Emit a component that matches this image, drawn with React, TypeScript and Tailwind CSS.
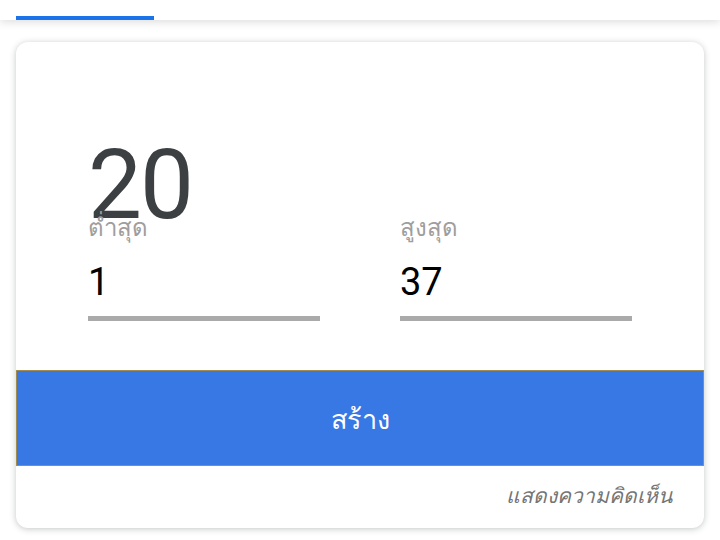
export default function App() {
  return (
    <div className="min-h-[540px] w-[720px] bg-white font-['Roboto','Noto_Sans',sans-serif]">
      <div className="relative h-5 bg-white shadow-[0_2px_8px_rgba(60,64,67,0.18)]">
        <div className="absolute bottom-0 left-4 h-1 w-[138px] bg-[#1a73e8]" />
      </div>

      <div className="mx-4 mt-[22px] overflow-hidden rounded-xl bg-white shadow-[0_1px_6px_rgba(60,64,67,0.3)]">
        <div className="px-[72px] pt-[93px]">
          <div className="h-[100px] text-[96px] leading-[100px] tracking-[-2px] text-[#3c4043]">20</div>
          <div className="relative -mt-[22px] grid grid-cols-2 gap-[80px]">
            <RangeField label="ต่ำสุด" value="1" />
            <RangeField label="สูงสุด" value="37" />
          </div>
        </div>

        <button className="mt-[49px] flex h-[96px] w-full items-center justify-center border border-[#a08c50] bg-[#3878e5] pt-1 text-[27px] text-white">
          สร้าง
        </button>

        <div className="flex h-[62px] items-center justify-end pr-8 text-[21px] italic text-[#757575]">
          แสดงความคิดเห็น
        </div>
      </div>
    </div>
  )
}

function RangeField({ label, value }: { label: string; value: string }) {
  return (
    <div className="flex flex-col">
      <div className="h-[30px] text-[24px] leading-[30px] text-[#9e9e9e]">{label}</div>
      <div className="mt-[15px] h-[48px] text-[38px] leading-[48px] text-black">{value}</div>
      <div className="mt-[10px] h-[5px] bg-[#aaaaaa]" />
    </div>
  )
}
